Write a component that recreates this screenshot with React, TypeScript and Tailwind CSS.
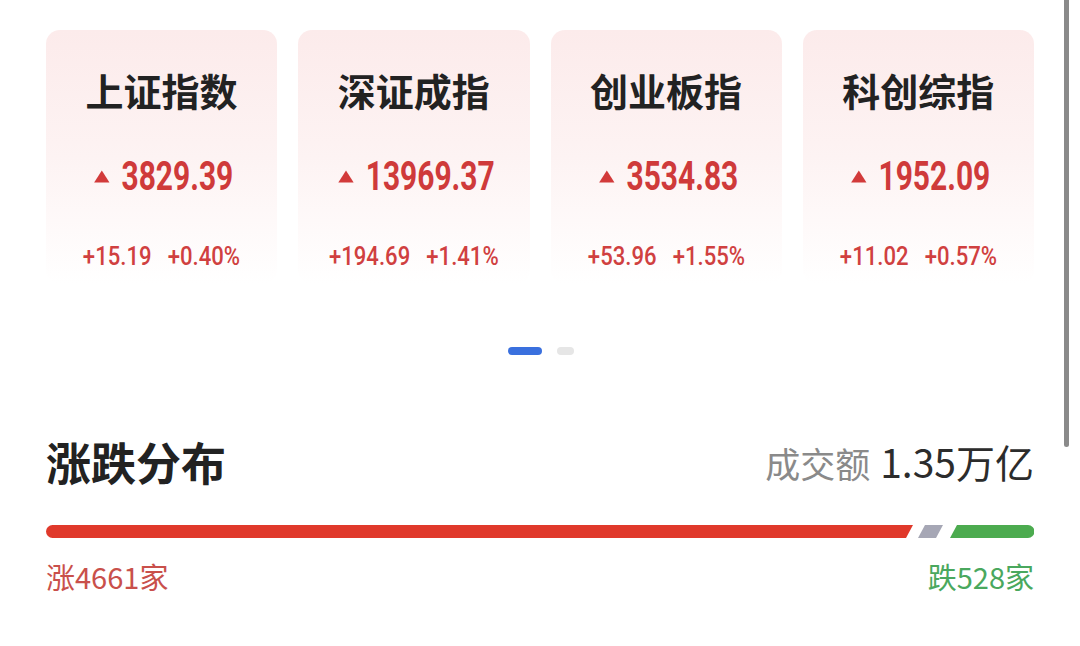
import React from "react";

type IndexQuote = {
  name: string;
  price: string;
  change: string;
  percent: string;
};

const quotes: IndexQuote[] = [
  { name: "上证指数", price: "3829.39", change: "+15.19", percent: "+0.40%" },
  { name: "深证成指", price: "13969.37", change: "+194.69", percent: "+1.41%" },
  { name: "创业板指", price: "3534.83", change: "+53.96", percent: "+1.55%" },
  { name: "科创综指", price: "1952.09", change: "+11.02", percent: "+0.57%" },
];

const cjk = "font-['Noto_Sans_CJK_SC','Noto_Sans',sans-serif]";
// quote figures are drawn narrow, so the rows holding them get squeezed on x
const digits = "font-['Roboto','Liberation_Sans',sans-serif]";

function UpTriangle() {
  return (
    <svg width="22" height="13" viewBox="0 0 22 13" className="shrink-0">
      <path d="M11 0.5 L21.5 12.5 L0.5 12.5 Z" fill="#d23a3a" />
    </svg>
  );
}

function QuoteCard({ quote }: { quote: IndexQuote }) {
  return (
    <div className="flex h-[254px] flex-col items-center rounded-[14px] bg-gradient-to-b from-[#fcebeb] via-[#fdf3f3] to-white">
      <div className="mt-[26px] flex h-[68px] items-center">
        <span className={`${cjk} text-[38px] font-bold leading-none text-[#222]`}>
          {quote.name}
        </span>
      </div>
      <div className="flex h-[104px] translate-x-[2px] scale-x-[0.73] items-center gap-[16px]">
        <UpTriangle />
        <span className={`${digits} text-[41px] font-bold leading-none text-[#cf3a3a]`}>
          {quote.price}
        </span>
      </div>
      <div
        className={`${digits} flex h-[56px] scale-x-[0.85] items-center gap-[19px] text-[26px] font-medium leading-none text-[#d04040]`}
      >
        <span>{quote.change}</span>
        <span>{quote.percent}</span>
      </div>
    </div>
  );
}

// Advance/decline bar: red run, grey flat slice, green run, cut on a slant.
function BreadthBar() {
  return (
    <svg width="988" height="13" viewBox="0 0 988 13" className="block">
      <path d="M6.5 0 L867 0 L860 13 L6.5 13 A6.5 6.5 0 0 1 6.5 0 Z" fill="#e0392b" />
      <path d="M879 0 L897 0 L890 13 L872 13 Z" fill="#a6a7b5" />
      <path d="M911 0 L982 0 A6.5 6.5 0 0 1 982 13 L904 13 Z" fill="#4cab4f" />
    </svg>
  );
}

export default function App() {
  return (
    <div className="relative h-[646px] w-[1080px] overflow-hidden bg-white">
      <div className="ml-[46px] w-[988px] pt-[30px]">
        <div className="grid grid-cols-4 gap-[21px]">
          {quotes.map((q) => (
            <QuoteCard key={q.name} quote={q} />
          ))}
        </div>

        <div className="mt-[63px] flex justify-center gap-[15px] pl-[1px]">
          <span className="h-[8px] w-[34px] rounded-full bg-[#3a70de]" />
          <span className="h-[8px] w-[17px] rounded-full bg-[#e6e6e6]" />
        </div>

        <div className="mt-[84px] flex items-center justify-between">
          <span className={`${cjk} text-[45px] font-bold leading-none text-[#222]`}>
            涨跌分布
          </span>
          <div className={`${cjk} flex items-baseline leading-none`}>
            <span className="text-[35px] text-[#8a8a8a]">成交额</span>
            <span className="ml-[10px] text-[39px] text-[#2c2c2c]">1.35万亿</span>
          </div>
        </div>

        <div className="mt-[41px]">
          <BreadthBar />
        </div>

        <div className={`${cjk} mt-[24px] flex justify-between text-[29px] leading-none`}>
          <span className="text-[#c9504b]">涨4661家</span>
          <span className="text-[#4aa85e]">跌528家</span>
        </div>
      </div>

      {/* page scroll indicator */}
      <div className="absolute left-[1064px] top-0 h-[447px] w-[5px] rounded-b-full bg-[#8a8a8a]" />
    </div>
  );
}
